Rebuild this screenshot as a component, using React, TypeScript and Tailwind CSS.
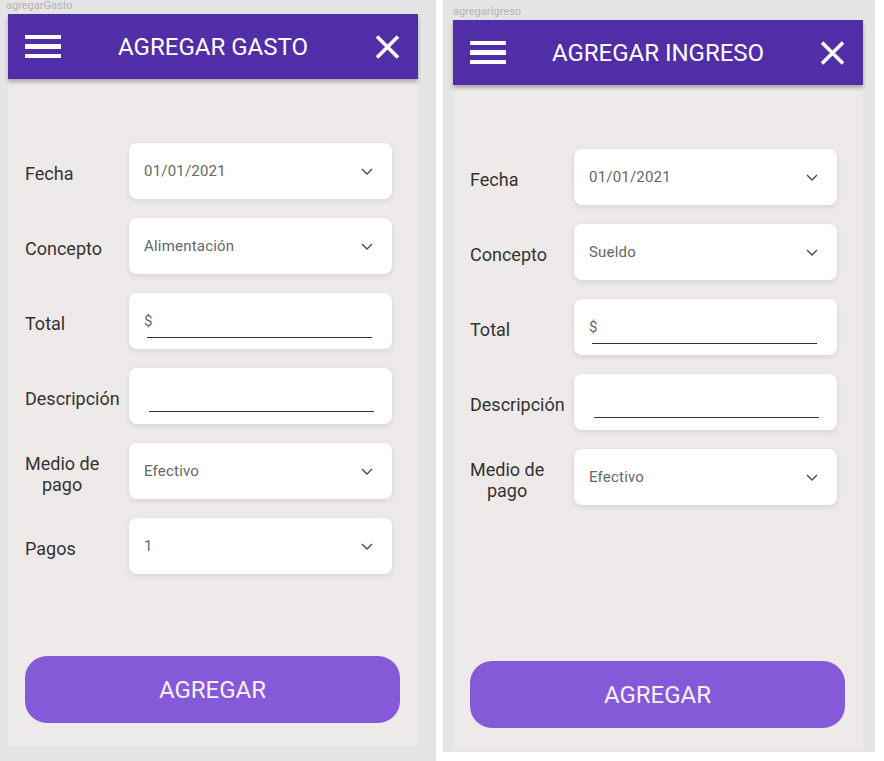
import React from "react";

type Field = { label: React.ReactNode; kind: "select" | "money" | "text"; value?: string };

function Chevron() {
  return (
    <svg width="12" height="7" viewBox="0 0 12 7" className="shrink-0">
      <polyline points="1,1 6,6 11,1" fill="none" stroke="#4a4a4a" strokeWidth="1.4" />
    </svg>
  );
}

function Row({ f }: { f: Field }) {
  return (
    <div className="flex items-center">
      <div className="w-[104px] pt-[5px] text-[18px] leading-[21px] text-[#333333]">{f.label}</div>
      <div className="relative flex h-[56px] w-[263px] items-center rounded-[8px] bg-white pl-[15px] pr-[19px] shadow-[0_2px_6px_rgba(0,0,0,0.10)]">
        {f.kind === "select" && (
          <>
            <span className="flex-1 text-[15px] tracking-[0.2px] text-[#666666]">{f.value}</span>
            <Chevron />
          </>
        )}
        {f.kind === "money" && (
          <>
            <span className="text-[15px] text-[#666666]">$</span>
            <div className="absolute left-[18px] right-[20px] bottom-[11px] h-[1.5px] bg-[#333333]" />
          </>
        )}
        {f.kind === "text" && <div className="absolute left-[20px] right-[18px] bottom-[12px] h-[1.5px] bg-[#333333]" />}
      </div>
    </div>
  );
}

function Frame({ title, fields, h }: { title: string; fields: Field[]; h: string }) {
  return (
    <div className={`flex w-[410px] flex-col bg-[#eeeae9] ${h}`}>
      <div className="relative z-10 grid h-[65px] grid-cols-[1fr_auto_1fr] items-center bg-[#512da8] px-[17px] shadow-[0_3px_4px_rgba(0,0,0,0.28)]">
        <div className="flex flex-col gap-[5px]">
          <div className="h-[4.5px] w-[36px] bg-white" />
          <div className="h-[4.5px] w-[36px] bg-white" />
          <div className="h-[4.5px] w-[36px] bg-white" />
        </div>
        <div className="text-[24px] leading-none text-white">{title}</div>
        <div className="flex justify-end pr-[1px]">
          <svg width="25" height="24" viewBox="0 0 25 24">
            <path d="M2 1.5 L23 22.5 M23 1.5 L2 22.5" stroke="white" strokeWidth="3.6" fill="none" />
          </svg>
        </div>
      </div>
      <div className="flex flex-1 flex-col px-[17px] pt-[64px]">
        <div className="flex flex-col gap-[19px]">
          {fields.map((f, i) => (
            <Row key={i} f={f} />
          ))}
        </div>
        <button className="mt-auto mb-[22px] h-[67px] w-[375px] rounded-[22px] bg-[#855ad8] text-[24px] text-[#f6f0ff]">
          AGREGAR
        </button>
      </div>
    </div>
  );
}

const medio = (
  <span className="inline-block text-center">
    Medio de
    <br />
    pago
  </span>
);

export default function App() {
  const gasto: Field[] = [
    { label: "Fecha", kind: "select", value: "01/01/2021" },
    { label: "Concepto", kind: "select", value: "Alimentación" },
    { label: "Total", kind: "money" },
    { label: "Descripción", kind: "text" },
    { label: medio, kind: "select", value: "Efectivo" },
    { label: "Pagos", kind: "select", value: "1" },
  ];
  const ingreso: Field[] = [
    { label: "Fecha", kind: "select", value: "01/01/2021" },
    { label: "Concepto", kind: "select", value: "Sueldo" },
    { label: "Total", kind: "money" },
    { label: "Descripción", kind: "text" },
    { label: medio, kind: "select", value: "Efectivo" },
  ];
  return (
    <div className="flex h-[761px] w-[884px] items-start bg-white font-['Roboto',sans-serif]">
      <div className="h-[761px] w-[436px] bg-[#e5e5e5] pl-[8px]">
        <div className="ml-[-2px] h-[14px] text-[11px] leading-[12px] text-[#b3b3b3]">agregarGasto</div>
        <Frame title="AGREGAR GASTO" fields={gasto} h="h-[731px]" />
      </div>
      <div className="ml-[7px] h-[752px] w-[432px] bg-[#e5e5e5] pl-[10px] pt-[6px]">
        <div className="h-[14px] text-[11px] leading-[12px] text-[#b3b3b3]">agregarIgreso</div>
        <Frame title="AGREGAR INGRESO" fields={ingreso} h="h-[730px]" />
      </div>
    </div>
  );
}
